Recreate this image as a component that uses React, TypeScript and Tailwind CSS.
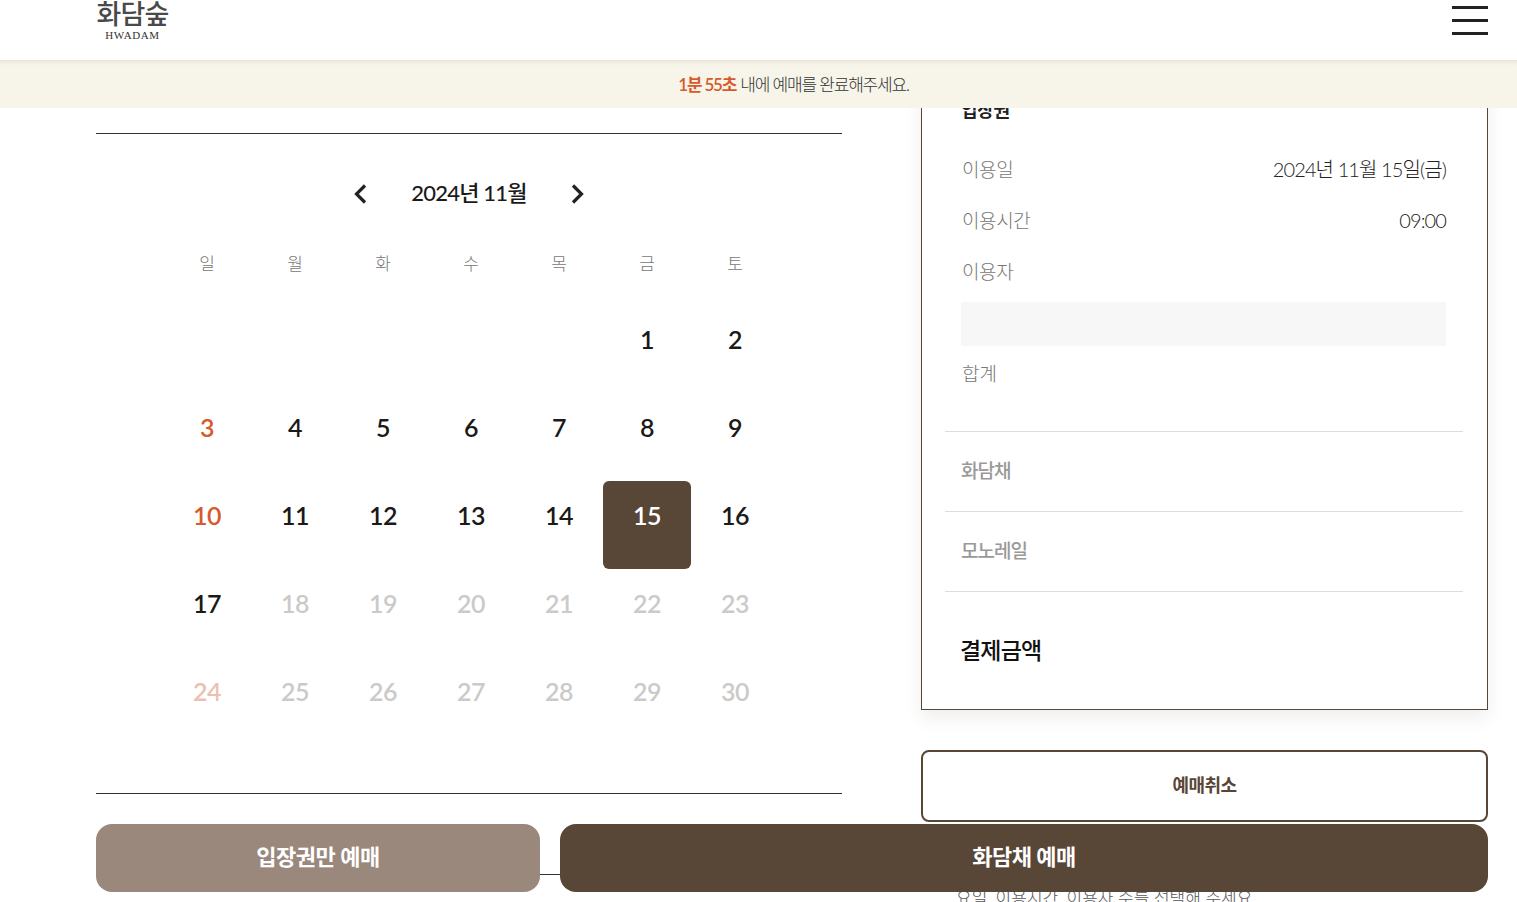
import React from 'react';

const FONT = "font-['Lato','Noto_Sans_CJK_KR',sans-serif]";

const weekdays = ['일', '월', '화', '수', '목', '금', '토'];

// null = blank cell before the 1st
const days: (number | null)[] = [null, null, null, null, null, ...Array.from({ length: 30 }, (_, i) => i + 1)];

function dayClass(day: number) {
  if (day === 15) return 'bg-[#584637] text-white rounded-md';
  if (day === 3 || day === 10) return 'text-[#d65a2c]';
  if (day === 24) return 'text-[#ecc0b0]';
  if (day > 17) return 'text-[#cccac8]';
  return 'text-[#1a1a1a]';
}

const InfoRow: React.FC<{ label: string; value?: string }> = ({ label, value }) => (
  <div className="flex justify-between items-center h-[51px] pl-[17px] pr-[17px]">
    <span className="text-[19px] leading-[24px] font-light text-[#777] tracking-[-0.4px]">{label}</span>
    {value && <span className="text-[20px] leading-[24px] pb-[2px] font-light text-[#222] tracking-[-0.9px]">{value}</span>}
  </div>
);

export default function App() {
  return (
    <div className={`${FONT} relative h-[902px] w-full overflow-hidden bg-white flex flex-col`}>
      {/* Header */}
      <header className="h-[60px] shrink-0 flex justify-between items-start pl-[96px] pr-[29px] bg-white relative z-20 overflow-hidden">
        <div className="flex flex-col items-center -mt-[3px] w-[73px]">
          <span className="text-[27px] leading-[34px] font-medium text-[#4a4a4a] tracking-[-0.8px] whitespace-nowrap">화담숲</span>
          <span className="text-[11px] leading-[10px] -mt-[1px] text-[#333] font-['Liberation_Serif',serif] tracking-[0.6px]">HWADAM</span>
        </div>
        <div className="flex flex-col gap-[10px] mt-[6px] w-[36px]">
          <div className="h-[3px] bg-[#222]"></div>
          <div className="h-[3px] bg-[#222]"></div>
          <div className="h-[3px] bg-[#222]"></div>
        </div>
      </header>

      {/* Timer banner */}
      <div className="h-[48px] shrink-0 bg-[#f7f4e9] flex items-center justify-center pl-[70px] pt-[1px] text-[17px] tracking-[-1.2px] font-light text-[#333] relative z-20 shadow-[inset_0_6px_6px_-6px_rgba(0,0,0,0.12)]">
        <span className="font-semibold text-[#d65a2c] mr-[4px]">1분 55초</span> 내에 예매를 완료해주세요.
      </div>

      {/* Content */}
      <main className="flex-1 min-h-0 flex gap-[79px] pl-[96px] pr-[29px]">
        <section className="w-[746px] shrink-0 pt-[25px]">
          <div className="border-t border-[#333] h-[660px] flex flex-col items-center">
            <div className="flex items-center h-[30px] mt-[43px] gap-[37px]">
              <svg className="mt-[3px]" width="14" height="20" viewBox="0 0 14 20" fill="none" stroke="#222" strokeWidth="3.2"><path d="M12 1.5 3.5 10 12 18.5" /></svg>
              <span className="text-[22px] font-medium text-[#1a1a1a] tracking-[-0.8px] w-[130px] text-center">2024년 11월</span>
              <svg className="mt-[3px]" width="14" height="20" viewBox="0 0 14 20" fill="none" stroke="#222" strokeWidth="3.2"><path d="M2 1.5 10.5 10 2 18.5" /></svg>
            </div>
            <div className="w-[616px] ml-[4px] grid grid-cols-7 mt-[42px]">
              {weekdays.map((w) => (
                <div key={w} className="h-[30px] flex items-center justify-center text-[17px] font-light text-[#777]">{w}</div>
              ))}
            </div>
            <div className="w-[616px] ml-[4px] grid grid-cols-7 auto-rows-[88px] mt-[26px]">
              {days.map((d, i) => (
                <div key={i} className={`flex items-center justify-center pb-[18px] text-[25px] tracking-[-0.5px] font-semibold ${d ? dayClass(d) : ''}`}>{d}</div>
              ))}
            </div>
          </div>
          <div className="border-t border-[#333] h-[81px]"></div>
          <div className="border-t border-[#333]"></div>
        </section>

        <aside className="flex-1 min-w-0 -mt-[30px]">
          <div className="h-[632px] border border-[#584637] shadow-[0_8px_18px_rgba(0,0,0,0.07)] pl-[23px] pr-[24px]">
            <div className="h-[25px]"></div>
            <div className="text-[18px] leading-[22px] font-bold text-[#222] pl-[16px] tracking-[-0.3px] -mt-[5px]">입장권</div>
            <div className="mt-[23px]">
              <InfoRow label="이용일" value="2024년 11월 15일(금)" />
              <InfoRow label="이용시간" value="09:00" />
              <InfoRow label="이용자" />
            </div>
            <div className="h-[44px] bg-[#f7f7f7] ml-[16px] mr-[17px] mt-[5px]"></div>
            <div className="flex h-[57px] items-center pl-[17px] text-[19px] font-light text-[#777]">합계</div>
            <div className="border-t border-[#ddd] h-[80px] flex items-center pl-[16px] text-[19px] font-medium text-[#999] tracking-[-1px] mt-[28px]">화담채</div>
            <div className="border-t border-[#ddd] h-[80px] flex items-center pl-[16px] text-[19px] font-medium text-[#999] tracking-[-1px]">모노레일</div>
            <div className="border-t border-[#ddd] h-[118px] flex items-center pl-[15px] text-[23px] font-medium text-[#111] tracking-[-0.8px]">결제금액</div>
          </div>
          <button className="mt-[40px] w-full h-[72px] border-2 border-[#584637] rounded-lg bg-white pb-[2px] text-[18px] font-bold text-[#584637] tracking-[-0.5px]">예매취소</button>
          <p className="mt-[63px] pl-[35px] text-[17px] font-light text-[#555] whitespace-nowrap">요일, 이용시간, 이용자 수를 선택해 주세요</p>
        </aside>
      </main>

      {/* Fixed bottom actions */}
      <div className="absolute left-[96px] right-[29px] top-[824px] flex gap-[20px] z-10">
        <button className="w-[444px] h-[68px] rounded-2xl bg-[#9a887c] pb-[3px] text-white text-[22px] font-bold tracking-[-0.5px]">입장권만 예매</button>
        <button className="flex-1 h-[68px] rounded-2xl bg-[#584637] pb-[3px] text-white text-[22px] font-bold tracking-[-0.5px]">화담채 예매</button>
      </div>
    </div>
  );
}
